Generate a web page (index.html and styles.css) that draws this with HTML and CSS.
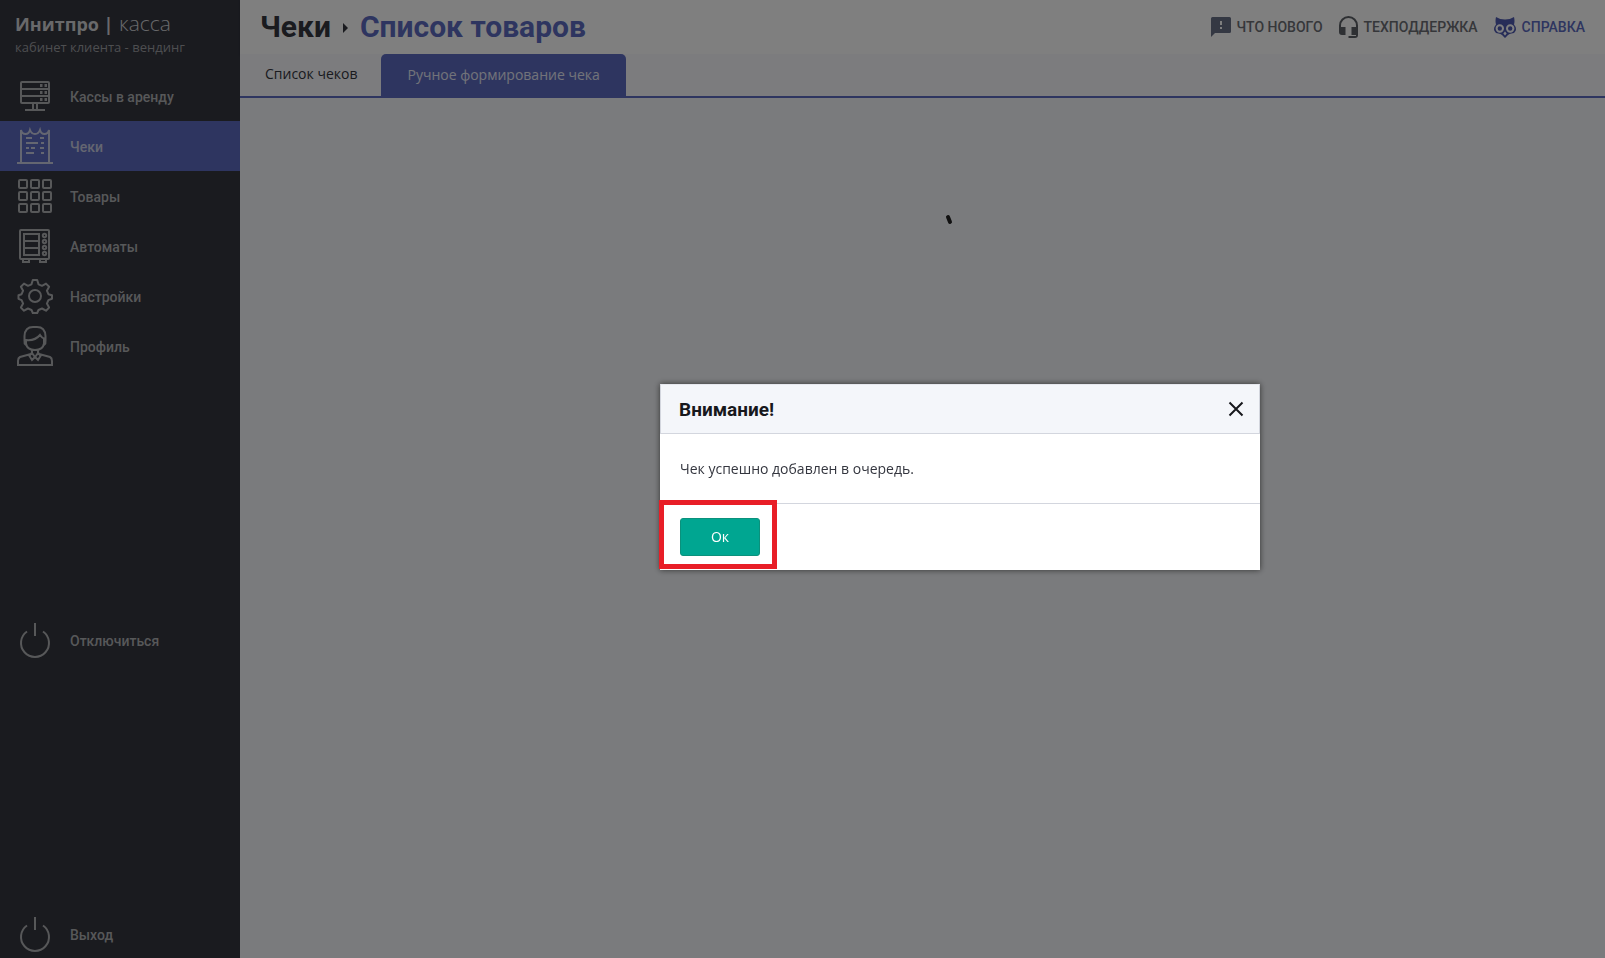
FILE: index.html
```html
<!DOCTYPE html>
<html lang="ru">
<head>
  <meta charset="UTF-8">
  <title>Чеки - Список товаров</title>
  <link rel="stylesheet" href="styles.css">
</head>
<body>
  <div class="page">
    <aside class="sidebar">
      <div class="brand">
        <div class="brand-name"><b>Инитпро |</b> касса</div>
        <div class="brand-sub">кабинет клиента - вендинг</div>
      </div>
      <nav class="menu">
        <div class="menu-group">
          <a class="menu-item" href="#">
            <svg class="icon" viewBox="0 0 40 44"><rect x="6" y="7" width="28" height="21" rx="1"/><path d="M6 14h28M6 21h28M18 28v7M22 28v7M10 35h20"/><path class="dots" d="M25 10.500h2.500M29.500 10.500h2.500M25 17.500h2.500M29.500 17.500h2.500M25 24.500h2.500M29.500 24.500h2.500"/></svg>
            <span>Кассы в аренду</span>
          </a>
          <a class="menu-item active" href="#">
            <svg class="icon" viewBox="0 0 40 44"><path d="M2 38h36M6 38V5q1 4 4.500 4T15 5q1.500 4 5 4t5-4q1 4 4.500 4T34 5v33M11 13h6M25 13h4M11 18h12M26 18h3M11 23h3M16 23h4M25 23h4M11 28h8M26 28h3"/></svg>
            <span>Чеки</span>
          </a>
          <a class="menu-item" href="#">
            <svg class="icon" viewBox="0 0 40 44"><rect x="4" y="5" width="8" height="8" rx="1"/><rect x="16" y="5" width="8" height="8" rx="1"/><rect x="28" y="5" width="8" height="8" rx="1"/><rect x="4" y="17" width="8" height="8" rx="1"/><rect x="16" y="17" width="8" height="8" rx="1"/><rect x="28" y="17" width="8" height="8" rx="1"/><rect x="4" y="29" width="8" height="8" rx="1"/><rect x="16" y="29" width="8" height="8" rx="1"/><rect x="28" y="29" width="8" height="8" rx="1"/></svg>
            <span>Товары</span>
          </a>
          <a class="menu-item" href="#">
            <svg class="icon" viewBox="0 0 40 44"><rect x="5" y="5" width="29" height="29" rx="1"/><rect x="9" y="9" width="15" height="21"/><path d="M9 16h15M9 23h15M8 34v3h6v-3M25 34v3h6v-3"/><circle cx="29.500" cy="10.500" r="1.700"/><circle cx="29.500" cy="16.500" r="1.700"/><circle cx="29.500" cy="22.500" r="1.700"/><circle cx="29.500" cy="28.500" r="1.700"/></svg>
            <span>Автоматы</span>
          </a>
          <a class="menu-item" href="#">
            <svg class="icon" viewBox="0 0 40 44"><circle cx="20" cy="21" r="6"/><path stroke-linejoin="round" d="M17.800 5h4.400l1.300 4.300 3.500 1.500 4-2.200 3.100 3.100-2.200 4 1.500 3.500 3.600 1v3.600l-3.600 1.300-1.500 3.500 2.200 4-3.100 3.100-4-2.200-3.500 1.500-1.300 3h-4.400l-1.300-3-3.500-1.500-4 2.200-3.100-3.100 2.200-4-1.500-3.500L3.500 23.800v-3.600l3.100-1 1.500-3.500-2.200-4L9 8.600l4 2.200 3.500-1.500z"/></svg>
            <span>Настройки</span>
          </a>
          <a class="menu-item" href="#">
            <svg class="icon" viewBox="0 0 40 44"><path d="M11 20q-2-1.500-1.500-4V11Q10 2 18 2h4q8 0 8.500 9v5q.5 2.500-1.500 4M11 15q9 1 14-5 2 3 4 3.500v5Q28 25 20 25t-9-6.500zM17 25v3l3 4 3-4v-3M16.500 28l-2 3 2.500 4 3-3 3 3 2.500-4-2-3M16 29l-11 3q-2 1-2 4v4h34v-4q0-3-2-4l-11-3"/></svg>
            <span>Профиль</span>
          </a>
        </div>
        <a class="menu-item" href="#">
          <svg class="icon" viewBox="0 0 40 44"><path d="M20 4v13M12 12.500a14 14 0 1 0 16 0"/></svg>
          <span>Отключиться</span>
        </a>
        <a class="menu-item" href="#">
          <svg class="icon" viewBox="0 0 40 44"><path d="M20 4v13M12 12.500a14 14 0 1 0 16 0"/></svg>
          <span>Выход</span>
        </a>
      </nav>
    </aside>

    <main class="main">
      <header class="topbar">
        <h1 class="title">Чеки <i class="arrow"></i> <a href="#">Список товаров</a></h1>
        <div class="links">
          <a href="#">
            <svg width="20" height="20" viewBox="0 0 20 20"><path fill="#687087" fill-rule="evenodd" d="M1.500 0h17q1.500 0 1.500 1.500v13q0 1.500-1.500 1.500H4l-4 4V1.500Q0 0 1.500 0zM9 4v4h2V4zm0 6v2h2v-2z"/></svg>
            <span>ЧТО НОВОГО</span>
          </a>
          <a href="#">
            <svg width="19" height="22" viewBox="0 0 19 22"><path fill="#5c6066" d="M9.500 0A9.500 9.500 0 0 0 0 9.500V16q0 3 3 3h3.500v-8H2V9.500a7.500 7.500 0 0 1 15 0V11h-4.500v8H17v1H9.500v2H16q3 0 3-3V9.500A9.500 9.500 0 0 0 9.500 0z"/></svg>
            <span>ТЕХПОДДЕРЖКА</span>
          </a>
          <a class="help" href="#">
            <svg width="22" height="21" viewBox="0 0 22 21"><path fill="#4f5bb0" d="M2 0q4 2.500 9 2.500T20 0q1 4 0 7.500 3 3.500 1.500 6.500-1 2.500-4 2.500-2 0-3.500 1.500l-3 3-3-3q-1.500-1.500-3.500-1.500-3 0-4-2.500Q-1 11 2 7.500 1 4 2 0z"/><g fill="#4f5bb0" stroke="#fff" stroke-width="2"><circle cx="5.800" cy="11.500" r="3.200"/><circle cx="16.200" cy="11.500" r="3.200"/></g><path fill="#fff" d="M11 14.500l1.700 2-1.700 2-1.700-2z"/></svg>
            <span>СПРАВКА</span>
          </a>
        </div>
      </header>
      <div class="tabs">
        <a class="tab" href="#">Список чеков</a>
        <a class="tab active" href="#">Ручное формирование чека</a>
      </div>
      <div class="content">
        <svg class="loader" width="60" height="60" viewBox="0 0 60 60"><path d="M29 27l2 5"/></svg>
      </div>
    </main>
  </div>

  <div class="overlay">
    <div class="modal" role="dialog" aria-labelledby="modal-title">
      <div class="modal-header">
        <h2 id="modal-title">Внимание!</h2>
        <button class="close" type="button" aria-label="Закрыть">
          <svg width="16" height="16" viewBox="0 0 16 16"><path d="M1.500 1.500l13 13M14.500 1.500l-13 13"/></svg>
        </button>
      </div>
      <div class="modal-body">Чек успешно добавлен в очередь.</div>
      <div class="modal-footer">
        <button class="btn" type="button">Ок</button>
      </div>
      <div class="highlight"></div>
    </div>
  </div>
</body>
</html>
```
FILE: styles.css
```css
* {
  margin: 0;
  padding: 0;
  box-sizing: border-box;
}

body, html {
  height: 100%;
  overflow: hidden;
}

body {
  font-family: 'Open Sans', 'Noto Sans', sans-serif;
  font-size: 14px;
  color: #34363f;
}

a {
  color: inherit;
  text-decoration: none;
}

.page {
  display: flex;
  height: 100vh;
}

/* sidebar */
.sidebar {
  display: flex;
  flex-direction: column;
  flex: 0 0 240px;
  background: #34363f;
  color: #afb0b3;
}

.brand {
  height: 71px;
  padding: 10px 15px 0;
}

.brand-name {
  font-size: 21px;
  font-weight: 300;
  line-height: 27px;
  color: #d2d3d6;
}

.brand-name b {
  font-size: 18px;
  font-weight: 700;
}

.brand-sub {
  font-size: 13px;
  line-height: 18px;
  color: #9b9ca0;
}

.menu {
  display: flex;
  flex-direction: column;
  justify-content: space-between;
  flex: 1;
  margin-bottom: -2px;
}

.menu-item {
  display: flex;
  align-items: center;
  gap: 15px;
  height: 50px;
  padding-left: 15px;
  font-family: Roboto, sans-serif;
  font-size: 14px;
  font-weight: 500;
}

.menu-group .menu-item {
  padding-top: 2px;
}

.menu-item.active {
  background: #5c6bc0;
  color: #c9cce3;
}

.icon {
  width: 40px;
  height: 44px;
  fill: none;
  stroke: currentColor;
  stroke-width: 2;
}

.icon .dots {
  stroke-width: 3;
}

/* main */
.main {
  display: flex;
  flex-direction: column;
  flex: 1;
  background: #f5f7fa;
}

.topbar {
  display: flex;
  align-items: center;
  justify-content: space-between;
  height: 54px;
  padding: 0 20px;
  background: #fff;
  box-shadow: 0 1px 2px rgba(0, 0, 0, 0.2);
}

.title {
  display: flex;
  align-items: center;
  gap: 12px;
  padding-bottom: 2px;
  font-family: Roboto, sans-serif;
  font-size: 30px;
  font-weight: 700;
}

.title a {
  color: #5c6bc0;
}

.arrow {
  margin-top: 4px;
  border: 5px solid transparent;
  border-left-color: #34363f;
  border-right: 0;
}

.links {
  display: flex;
  gap: 16px;
  font-family: Roboto, sans-serif;
  font-size: 14px;
  font-weight: 500;
  color: #6c6e74;
}

.links a {
  display: flex;
  align-items: center;
  gap: 6px;
}

.links .help {
  color: #5c6bc0;
}

.tabs {
  display: flex;
  height: 44px;
  padding-left: 1px;
  border-bottom: 2px solid #5c6bc0;
  background: #f8f9fc;
}

.tab {
  padding: 0 24px;
  line-height: 40px;
}

.tab.active {
  position: relative;
  padding: 0 26px;
  border-radius: 5px 5px 0 0;
  background: #5c6bc0;
  color: #e4e6f4;
  line-height: 42px;
}

.content {
  flex: 1;
  padding: 92px 0 0 52px;
}

.loader {
  display: block;
  margin: 0 auto;
  fill: none;
  stroke: #222;
  stroke-width: 4;
  stroke-linecap: round;
}

/* modal */
.overlay {
  position: fixed;
  top: 0;
  left: 0;
  right: 0;
  bottom: 0;
  display: flex;
  align-items: center;
  justify-content: center;
  padding: 0 0 4px 315px;
  background: rgba(0, 0, 0, 0.5);
  z-index: 10;
}

.modal {
  position: relative;
  width: 600px;
  background: #fff;
  box-shadow: 0 0 6px rgba(0, 0, 0, 0.6);
}

.modal-header {
  display: flex;
  align-items: center;
  justify-content: space-between;
  height: 50px;
  padding: 0 15px 0 18px;
  border: 1px solid #d3d6de;
  border-top-color: #e6e8ee;
  background: #f4f6fa;
}

.modal-header h2 {
  font-family: Roboto, sans-serif;
  font-size: 19px;
  font-weight: 700;
  color: #17181c;
}

.close {
  display: flex;
  border: none;
  background: none;
  cursor: pointer;
}

.close svg {
  stroke: #17181c;
  stroke-width: 2;
}

.modal-body {
  padding: 25px 20px;
  line-height: 19px;
}

.modal-footer {
  padding: 14px 20px;
  border-top: 1px solid #d3d6de;
}

.btn {
  display: block;
  width: 80px;
  height: 38px;
  padding-bottom: 2px;
  border: 1px solid #0b917c;
  border-radius: 3px;
  background: #00a691;
  color: #fff;
  font-family: inherit;
  font-size: 14px;
  cursor: pointer;
}

.btn:hover {
  background: #0b917c;
}

.highlight {
  position: absolute;
  left: -1px;
  bottom: 1px;
  width: 118px;
  height: 69px;
  border: 5px solid #e81e27;
  pointer-events: none;
}
```
